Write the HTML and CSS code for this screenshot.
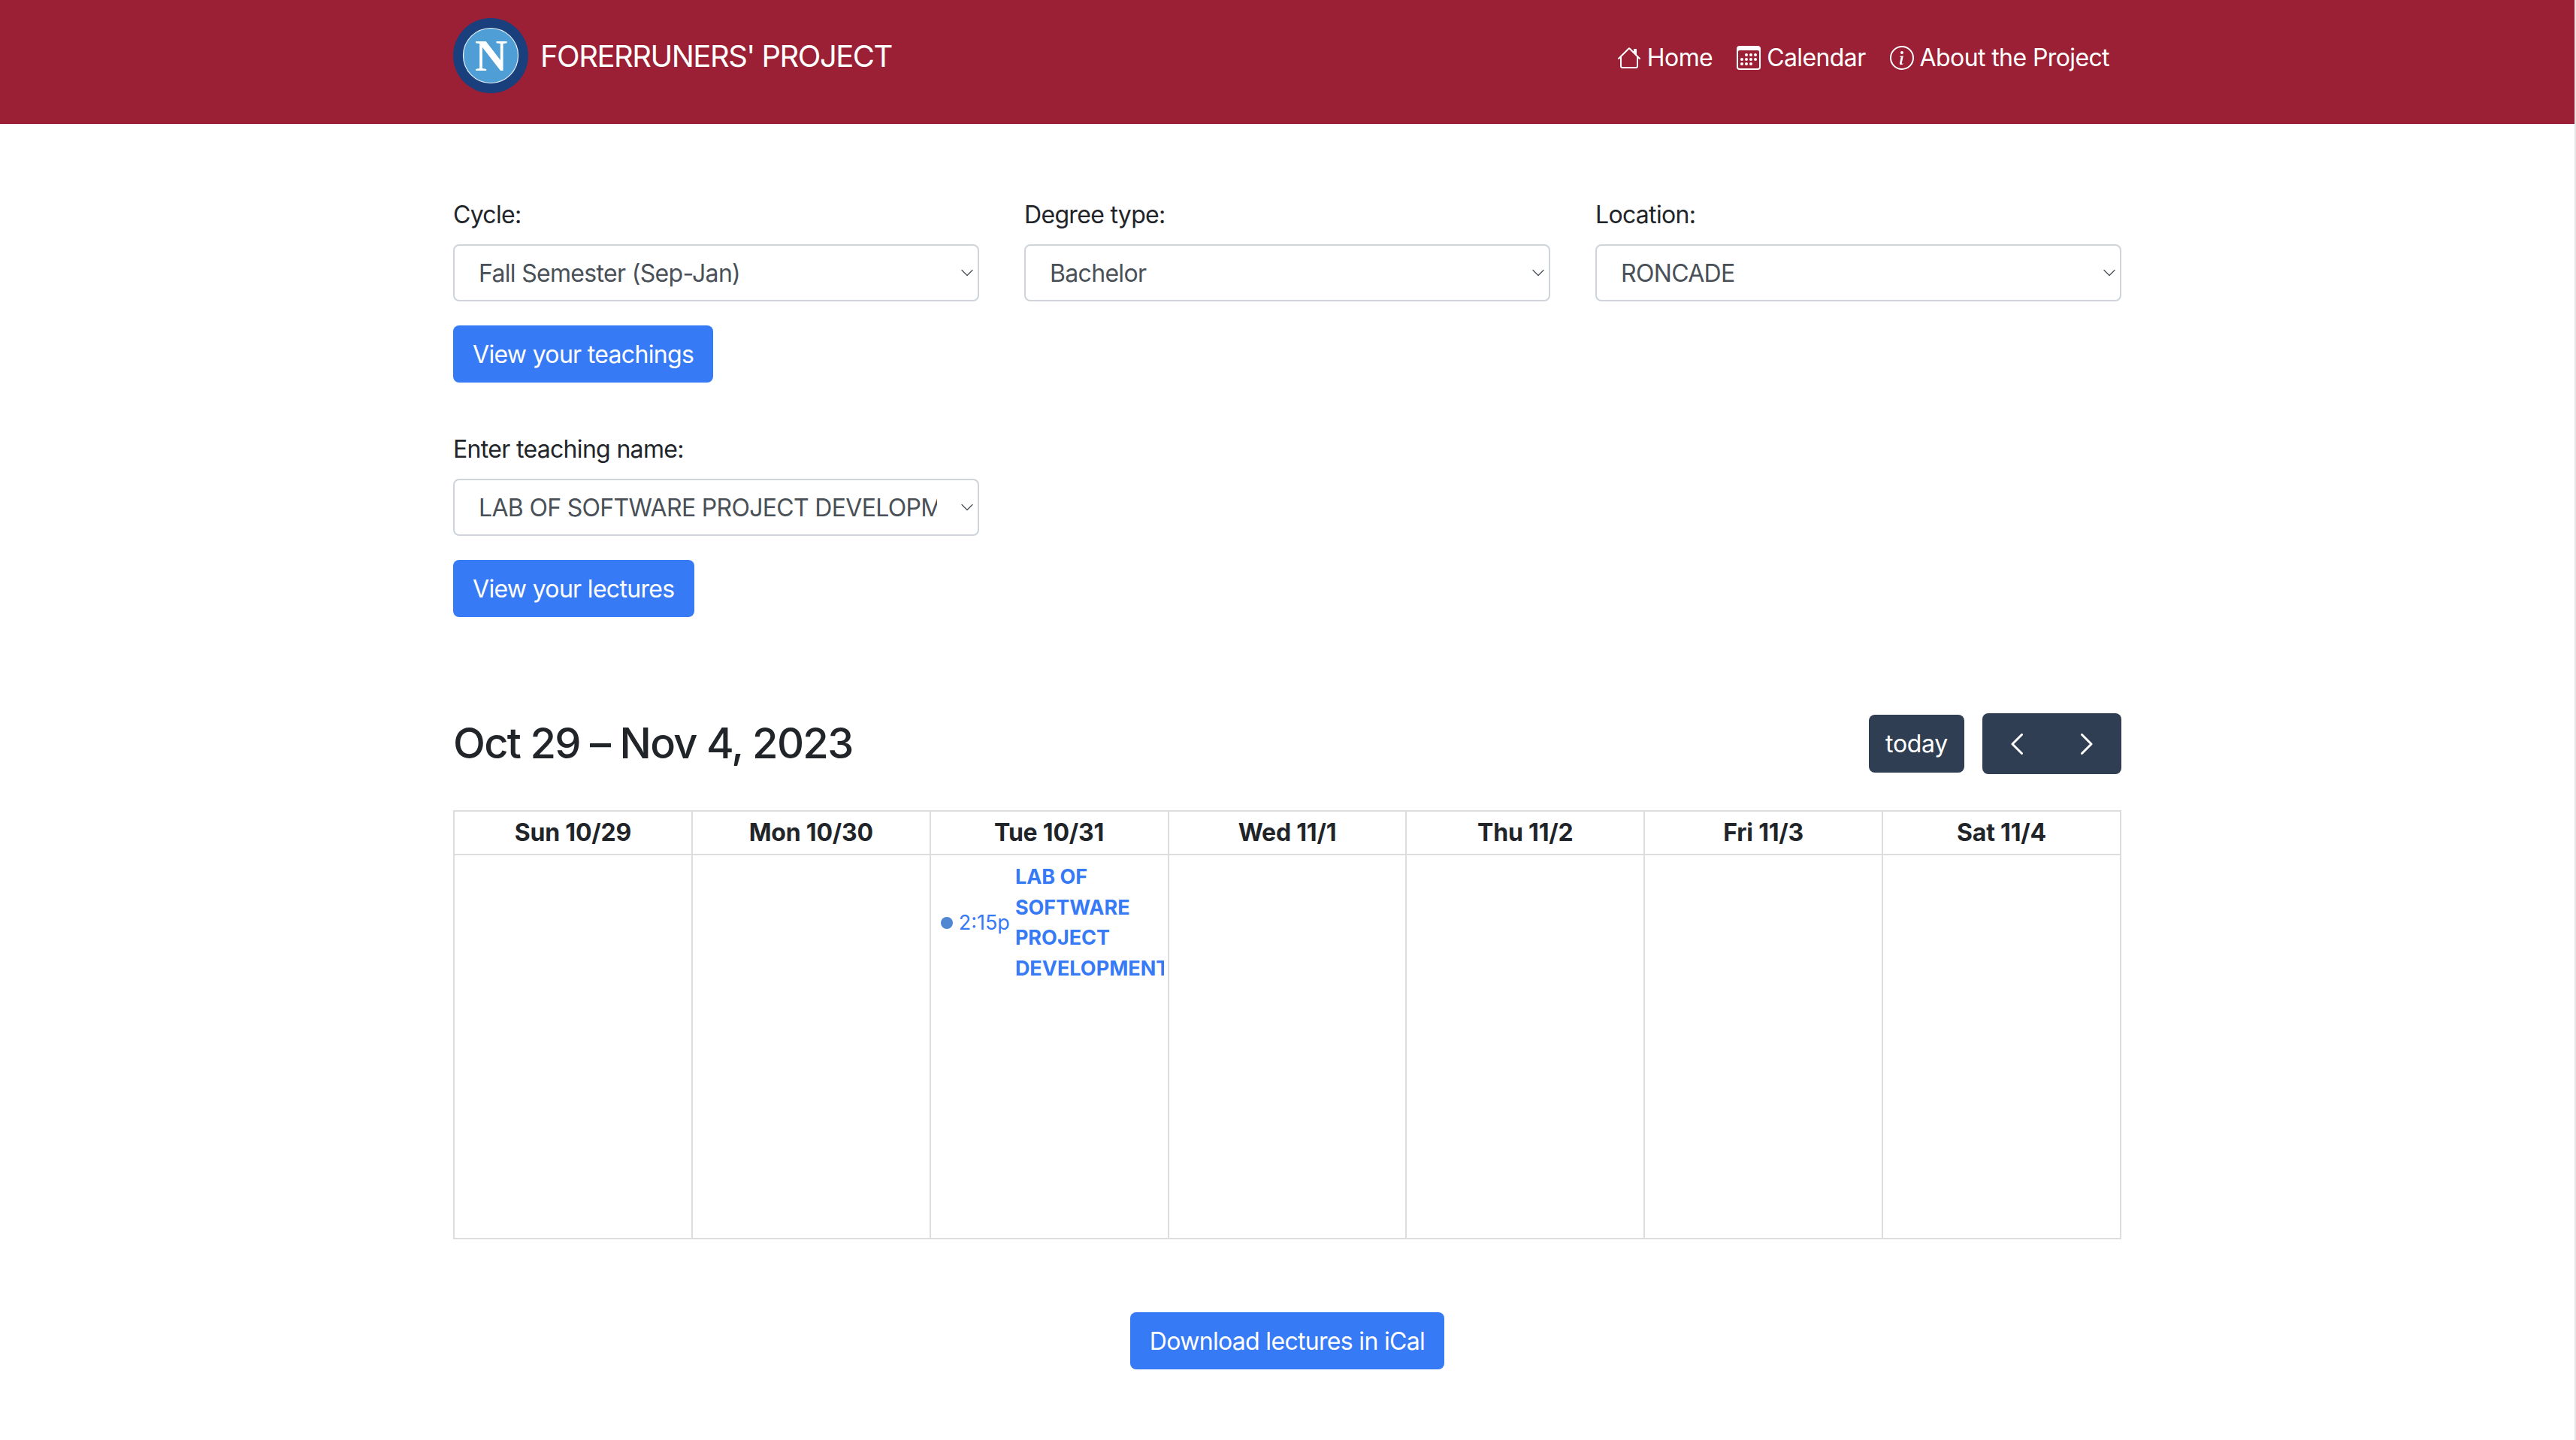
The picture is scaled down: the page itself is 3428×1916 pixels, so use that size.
FILE: index.html
```html
<!DOCTYPE html>
<html lang="en">
<head>
    <meta charset="UTF-8">
    <title>Forerruners' Project</title>
    <link rel="stylesheet" href="styles.css">
</head>
<body>
    <header class="topbar">
        <div class="topbar-inner">
            <a class="brand" href="#">
                <svg class="brand-logo" viewBox="0 0 100 100" width="100" height="100">
                    <circle cx="50" cy="50" r="50" fill="#1a3f7d"/>
                    <circle cx="50" cy="50" r="36.5" fill="#4f9fd6" stroke="#e6f0f6" stroke-width="1.2"/>
                    <text x="50" y="69.5" text-anchor="middle" class="brand-letter">N</text>
                </svg>
                <span class="brand-name">FORERRUNERS' PROJECT</span>
            </a>
            <nav class="nav">
                <a class="nav-link" href="#">
                    <svg viewBox="0 0 16 16" width="32" height="32" fill="currentColor"><path fill-rule="evenodd" d="M2 13.5V7h1v6.5a.5.5 0 0 0 .5.5h9a.5.5 0 0 0 .5-.5V7h1v6.5a1.5 1.5 0 0 1-1.5 1.5h-9A1.5 1.5 0 0 1 2 13.5zm11-11V6l-2-2V2.5a.5.5 0 0 1 .5-.5h1a.5.5 0 0 1 .5.5z"/><path fill-rule="evenodd" d="M7.293 1.5a1 1 0 0 1 1.414 0l6.647 6.646a.5.5 0 0 1-.708.708L8 2.207 1.354 8.854a.5.5 0 1 1-.708-.708L7.293 1.5z"/></svg>
                    Home
                </a>
                <a class="nav-link" href="#">
                    <svg viewBox="0 0 16 16" width="32" height="32" fill="currentColor"><path d="M14 0H2a2 2 0 0 0-2 2v12a2 2 0 0 0 2 2h12a2 2 0 0 0 2-2V2a2 2 0 0 0-2-2zM1 3.857C1 3.384 1.448 3 2 3h12c.552 0 1 .384 1 .857v10.286c0 .473-.448.857-1 .857H2c-.552 0-1-.384-1-.857V3.857z"/><path d="M6.5 7a1 1 0 1 0 0-2 1 1 0 0 0 0 2zm3 0a1 1 0 1 0 0-2 1 1 0 0 0 0 2zm3 0a1 1 0 1 0 0-2 1 1 0 0 0 0 2zm-9 3a1 1 0 1 0 0-2 1 1 0 0 0 0 2zm3 0a1 1 0 1 0 0-2 1 1 0 0 0 0 2zm3 0a1 1 0 1 0 0-2 1 1 0 0 0 0 2zm3 0a1 1 0 1 0 0-2 1 1 0 0 0 0 2zm-9 3a1 1 0 1 0 0-2 1 1 0 0 0 0 2zm3 0a1 1 0 1 0 0-2 1 1 0 0 0 0 2zm3 0a1 1 0 1 0 0-2 1 1 0 0 0 0 2z"/></svg>
                    Calendar
                </a>
                <a class="nav-link" href="#">
                    <svg viewBox="0 0 16 16" width="32" height="32" fill="currentColor"><path d="M8 15A7 7 0 1 1 8 1a7 7 0 0 1 0 14zm0 1A8 8 0 1 0 8 0a8 8 0 0 0 0 16z"/><path d="m8.93 6.588-2.29.287-.082.38.45.083c.294.07.352.176.288.469l-.738 3.468c-.194.897.105 1.319.808 1.319.545 0 1.178-.252 1.465-.598l.088-.416c-.2.176-.492.246-.686.246-.275 0-.375-.193-.304-.533L8.93 6.588zM9 4.5a1 1 0 1 1-2 0 1 1 0 0 1 2 0z"/></svg>
                    About the Project
                </a>
            </nav>
        </div>
    </header>

    <main class="content">
        <div class="filters">
            <div class="field">
                <label for="cycle">Cycle:</label>
                <select id="cycle"><option>Fall Semester (Sep-Jan)</option></select>
            </div>
            <div class="field">
                <label for="degree">Degree type:</label>
                <select id="degree"><option>Bachelor</option></select>
            </div>
            <div class="field">
                <label for="location">Location:</label>
                <select id="location"><option>RONCADE</option></select>
            </div>
        </div>
        <button class="btn btn-step" type="button">View your teachings</button>

        <div class="filters filters-teaching">
            <div class="field">
                <label for="teaching">Enter teaching name:</label>
                <select id="teaching"><option>LAB OF SOFTWARE PROJECT DEVELOPMENT</option></select>
            </div>
        </div>
        <button class="btn btn-step" type="button">View your lectures</button>

        <section class="calendar">
            <div class="cal-toolbar">
                <h2>Oct 29 – Nov 4, 2023</h2>
                <div class="cal-actions">
                    <button class="cal-btn cal-today" type="button">today</button>
                    <div class="cal-btn cal-arrows">
                        <svg viewBox="0 0 16 28" width="16" height="28" fill="none" stroke="#fff" stroke-width="3" stroke-linecap="round" stroke-linejoin="round"><path d="M14.5 1.5 2 14l12.500 12.500"/></svg>
                        <svg viewBox="0 0 16 28" width="16" height="28" fill="none" stroke="#fff" stroke-width="3" stroke-linecap="round" stroke-linejoin="round"><path d="M1.500 1.500 14 14 1.500 26.500"/></svg>
                    </div>
                </div>
            </div>

            <table class="week">
                <thead>
                    <tr>
                        <th>Sun 10/29</th>
                        <th>Mon 10/30</th>
                        <th>Tue 10/31</th>
                        <th>Wed 11/1</th>
                        <th>Thu 11/2</th>
                        <th>Fri 11/3</th>
                        <th>Sat 11/4</th>
                    </tr>
                </thead>
                <tbody>
                    <tr>
                        <td></td>
                        <td></td>
                        <td>
                            <div class="event">
                                <span class="event-dot"></span>
                                <span class="event-time">2:15p</span>
                                <span class="event-title">LAB OF SOFTWARE PROJECT DEVELOPMENT</span>
                            </div>
                        </td>
                        <td></td>
                        <td></td>
                        <td></td>
                        <td></td>
                    </tr>
                </tbody>
            </table>
        </section>

        <div class="download">
            <button class="btn" type="button">Download lectures in iCal</button>
        </div>
    </main>
</body>
</html>
```

FILE: styles.css
```css
* {
    box-sizing: border-box;
}

body {
    margin: 0;
    border-right: 2px solid #e6e6e6;
    background: #fff;
    color: #212529;
    font-family: Inter, "Liberation Sans", sans-serif;
    font-size: 32px;
    line-height: 48px;
    letter-spacing: -0.68px;
}

/* Barre du haut */
.topbar {
    height: 165px;
    background: #9b2035;
}

.topbar-inner {
    width: 2220px;
    margin-left: 603px;
    height: 100%;
    display: flex;
    justify-content: space-between;
    align-items: flex-start;
}

.brand {
    display: flex;
    align-items: center;
    gap: 16px;
    margin-top: 24px;
    color: #fff;
    font-size: 40px;
    letter-spacing: -1.500px;
    text-decoration: none;
}

.brand-logo {
    display: block;
}

.brand-letter {
    fill: #fff;
    font-family: "Liberation Serif", serif;
    font-size: 60px;
    font-weight: 700;
}

.brand-name {
    padding-top: 1px;
}

.nav {
    display: flex;
    margin-top: 53px;
    letter-spacing: -0.600px;
}

.nav-link {
    display: flex;
    align-items: center;
    gap: 8px;
    padding: 0 16px;
    color: #fff;
    text-decoration: none;
}

/* Formulaire */
.content {
    width: 2220px;
    margin-left: 603px;
    padding-top: 97px;
}

.filters {
    display: grid;
    grid-template-columns: repeat(3, 700px);
    gap: 60px;
}

.filters-teaching {
    margin-top: 65px;
}

.field label {
    display: block;
    margin-bottom: 15px;
}

.field select {
    display: block;
    width: 100%;
    height: 76px;
    padding: 0 54px 0 32px;
    border: 2px solid #ced4da;
    border-radius: 8px;
    background: #fff url("data:image/svg+xml,%3Csvg xmlns='http://www.w3.org/2000/svg' viewBox='0 0 16 16'%3E%3Cpath fill='none' stroke='%23495057' stroke-linecap='round' stroke-linejoin='round' stroke-width='1.300' d='M1 4.500l7 7 7-7'/%3E%3C/svg%3E") no-repeat right 6px center / 16px 16px;
    color: #495057;
    font-family: inherit;
    font-size: 32px;
    letter-spacing: inherit;
    appearance: none;
}

.btn {
    display: block;
    height: 76px;
    padding: 0 26px;
    border: 0;
    border-radius: 8px;
    background: #377af6;
    color: #fff;
    font-family: inherit;
    font-size: 32px;
    letter-spacing: inherit;
}

.btn-step {
    margin-top: 32px;
}

/* Calendrier */
.calendar {
    margin-top: 128px;
}

.cal-toolbar {
    display: flex;
    justify-content: space-between;
    align-items: center;
    height: 81px;
    margin-bottom: 48px;
}

.cal-toolbar h2 {
    margin: 0;
    font-size: 56px;
    font-weight: 500;
    line-height: 81px;
    letter-spacing: -1.700px;
}

.cal-actions {
    display: flex;
    align-items: center;
    gap: 24px;
}

.cal-btn {
    border: 0;
    border-radius: 8px;
    background: #2f3e52;
    color: #fff;
    font-family: inherit;
}

.cal-today {
    width: 127px;
    height: 77px;
    font-size: 32px;
    letter-spacing: -0.300px;
}

.cal-arrows {
    display: flex;
    justify-content: space-between;
    align-items: center;
    width: 185px;
    height: 81px;
    padding: 0 38px;
}

.week {
    width: 100%;
    border-collapse: collapse;
    table-layout: fixed;
}

.week th,
.week td {
    border: 2px solid #ddd;
    padding: 0;
}

.week th {
    height: 58px;
    font-weight: 700;
    line-height: 48px;
    letter-spacing: -0.200px;
}

.week td {
    height: 511px;
    vertical-align: top;
}

.event {
    display: flex;
    align-items: center;
    padding-top: 9px;
    padding-left: 13px;
    overflow: hidden;
    letter-spacing: 0;
}

.event-dot {
    flex: none;
    width: 16px;
    height: 16px;
    margin-right: 8px;
    border-radius: 50%;
    background: #4f87d2;
}

.event-time {
    flex: none;
    margin-right: 7px;
    color: #377af6;
    font-size: 27px;
}

.event-title {
    flex: none;
    width: 198px;
    overflow: hidden;
    color: #377af6;
    font-size: 27px;
    font-weight: 700;
    line-height: 40.700px;
}

.download {
    display: flex;
    justify-content: center;
    margin-top: 97px;
    padding-bottom: 95px;
}
```
